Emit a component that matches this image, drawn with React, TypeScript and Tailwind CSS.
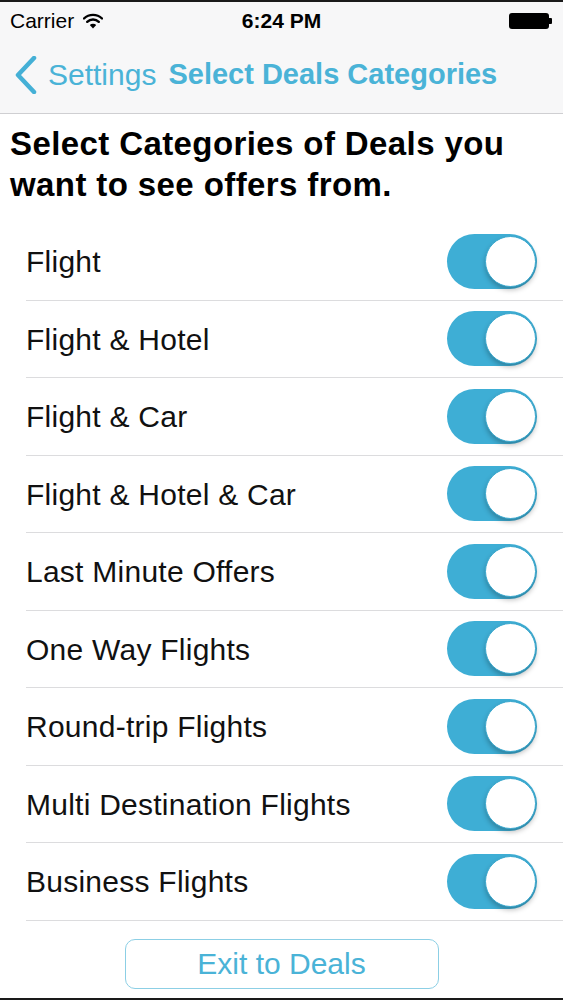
// Purpose: iOS-style settings screen for picking deal categories.
// Logic: Static list of categories, each with an "on" switch.

const categories = [
  'Flight',
  'Flight & Hotel',
  'Flight & Car',
  'Flight & Hotel & Car',
  'Last Minute Offers',
  'One Way Flights',
  'Round-trip Flights',
  'Multi Destination Flights',
  'Business Flights',
];

function Wifi() {
  return (
    <svg width="20" height="16" viewBox="0 0 20 16" fill="none">
      <path d="M1 5.5a13 13 0 0 1 18 0" stroke="#000" strokeWidth="2.4" strokeLinecap="round" />
      <path d="M4.2 8.8a8.4 8.4 0 0 1 11.6 0" stroke="#000" strokeWidth="2.4" strokeLinecap="round" />
      <path d="M10 15.5l-3.2-3.4a4.6 4.6 0 0 1 6.4 0z" fill="#000" />
    </svg>
  );
}

function Battery() {
  return (
    <div className="flex items-center">
      <div className="w-[40px] h-[16px] rounded-[3px] bg-black" />
      <div className="w-[3px] h-[6px] rounded-r-[1px] bg-black" />
    </div>
  );
}

function Toggle() {
  return (
    <div className="relative w-[90px] h-[55px] rounded-full bg-[#3eaed5]">
      <div className="absolute right-[1px] top-[2px] w-[51px] h-[51px] rounded-full bg-white border border-[#39a7cd] shadow-[0_3px_5px_rgba(0,0,0,0.25)]" />
    </div>
  );
}

export default function App() {
  return (
    <div className="w-[563px] h-[1000px] bg-white flex flex-col overflow-hidden" style={{ fontFamily: '"Liberation Sans", Arial, sans-serif' }}>
      <div className="h-[2px] bg-[#1a1a1a]" />
      <div className="bg-[#f7f7f8] border-b border-[#cfcfd2]">
        <div className="relative h-[38px] flex items-center px-[10px]">
          <span className="text-[21px] text-black">Carrier</span>
          <span className="ml-[9px]"><Wifi /></span>
          <span className="absolute left-0 right-0 -mt-[1px] text-center text-[21px] font-bold text-black">6:24 PM</span>
          <span className="ml-auto mr-[1px]"><Battery /></span>
        </div>
        <div className="h-[73px] flex items-center pl-[15px] pb-[4px]">
          <svg width="22" height="38" viewBox="0 0 22 38" fill="none">
            <path d="M19 2L3 19l16 17" stroke="#45b0d6" strokeWidth="4.5" strokeLinecap="round" strokeLinejoin="round" />
          </svg>
          <span className="ml-[11px] text-[30px] text-[#4ab3d7]">Settings</span>
          <span className="ml-[12px] text-[29px] font-bold text-[#4ab3d7]">Select Deals Categories</span>
        </div>
      </div>

      <h1 className="px-[10px] pt-[9px] text-[33px] leading-[41px] tracking-[0.4px] font-bold text-black">
        Select Categories of Deals you want to see offers from.
      </h1>

      <div className="mt-[18px] pl-[26px]">
        {categories.map(name => (
          <div key={name} className="h-[77.5px] flex items-center justify-between border-b border-[#dcdcde] pr-[26px]">
            <span className="text-[30px] tracking-[0.25px] text-[#111] pt-[1px]">{name}</span>
            <Toggle />
          </div>
        ))}
      </div>

      <div className="flex justify-center mt-[18px]">
        <button className="w-[314px] h-[50px] rounded-[10px] border border-[#8ccfe5] text-[30px] text-[#4ab3d7]">
          Exit to Deals
        </button>
      </div>

      <div className="mt-auto h-[2px] bg-[#1a1a1a]" />
    </div>
  );
}
